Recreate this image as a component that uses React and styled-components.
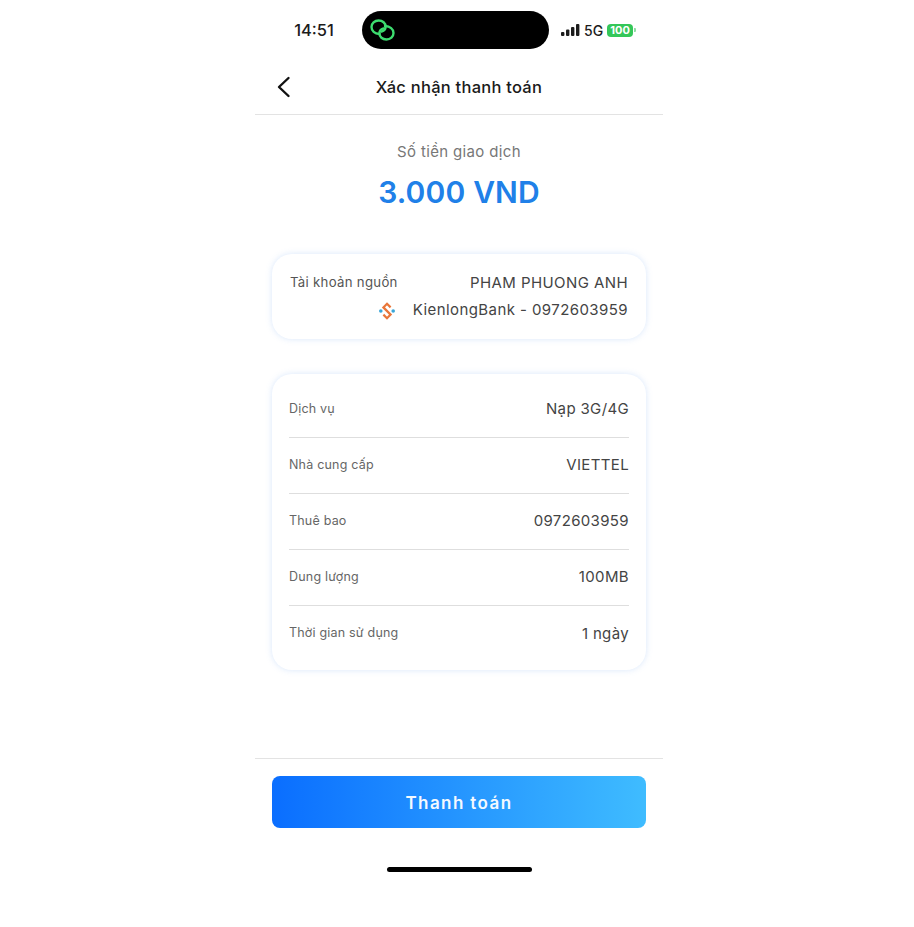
import React from "react";
import styled, { createGlobalStyle } from "styled-components";

const GlobalStyle = createGlobalStyle`
  html, body {
    margin: 0;
    padding: 0;
    background: #ffffff;
  }
  body {
    font-family: Inter, "Noto Sans", "Liberation Sans", sans-serif;
  }
`;

const Page = styled.div`
  width: 914px;
  height: 927px;
  padding-left: 255px;
  box-sizing: border-box;
  overflow: hidden;
`;

const Phone = styled.div`
  width: 408px;
  display: flex;
  flex-direction: column;
`;

const StatusBar = styled.div`
  height: 60px;
  padding-top: 11px;
  box-sizing: border-box;
  display: flex;
  align-items: flex-start;
`;

const Clock = styled.div`
  width: 107px;
  height: 38px;
  padding-left: 11px;
  box-sizing: border-box;
  line-height: 38px;
  text-align: center;
  font-size: 16.5px;
  font-weight: 500;
  color: #1c1c1c;
`;

const Island = styled.div`
  width: 187px;
  height: 38px;
  border-radius: 19px;
  background: #000;
  display: flex;
  align-items: center;
  padding-left: 8px;
  box-sizing: border-box;
`;

const StatusRight = styled.div`
  height: 38px;
  margin-left: 12px;
  display: flex;
  align-items: center;
`;

const Network = styled.span`
  margin: 0 4px 0 4px;
  font-size: 14px;
  font-weight: 500;
  color: #1c1c1c;
`;

const Battery = styled.span`
  width: 26px;
  height: 13px;
  border-radius: 4px;
  background: #34c759;
  color: #fff;
  font-size: 11px;
  font-weight: 700;
  line-height: 13px;
  text-align: center;
`;

const BatteryCap = styled.span`
  width: 1.5px;
  height: 4px;
  margin-left: 1px;
  border-radius: 0 1px 1px 0;
  background: #8fdca3;
`;

const Header = styled.header`
  height: 55px;
  border-bottom: 1px solid #e3e3e3;
  box-sizing: border-box;
  display: flex;
  align-items: center;
  justify-content: center;
  position: relative;
  padding-bottom: 1px;
`;

const BackButton = styled.div`
  position: absolute;
  left: 20px;
  top: 14px;
  width: 18px;
  height: 26px;
`;

const Title = styled.h1`
  margin: 0;
  font-size: 16.5px;
  font-weight: 500;
  letter-spacing: 0.25px;
  color: #1a1a1a;
`;

const Amount = styled.section`
  height: 139px;
  padding-top: 27px;
  box-sizing: border-box;
  display: flex;
  flex-direction: column;
  align-items: center;
`;

const AmountLabel = styled.div`
  font-size: 15px;
  line-height: 20px;
  letter-spacing: 0.35px;
  color: #777;
`;

const AmountValue = styled.div`
  margin-top: 11px;
  font-size: 30px;
  line-height: 38px;
  font-weight: 600;
  letter-spacing: 0.15px;
  color: #2080e8;
`;

const Card = styled.section`
  margin: 0 17px;
  background: #fff;
  border-radius: 20px;
  box-shadow: 0 0 6px rgba(120, 170, 240, 0.28);
`;

const SourceCard = styled(Card)`
  height: 85px;
  padding: 16px 18px 0 18px;
  box-sizing: border-box;
  display: flex;
  flex-direction: column;
`;

const SourceRow = styled.div`
  display: flex;
  justify-content: space-between;
  align-items: center;
  height: 27px;
`;

const SourceLabel = styled.span`
  font-size: 13.2px;
  line-height: 20px;
  letter-spacing: 0.3px;
  color: #555;
  margin-top: -3px;
`;

const SourceValue = styled.span`
  font-size: 15px;
  line-height: 20px;
  letter-spacing: 0.42px;
  color: #444;
  margin-top: -1px;
`;

const BankRow = styled(SourceRow)`
  justify-content: flex-end;
  gap: 18px;
`;

const DetailCard = styled(Card)`
  margin-top: 35px;
  height: 296px;
  padding: 8px 17px 0 17px;
  box-sizing: border-box;
`;

const DetailRow = styled.div`
  height: 56px;
  box-sizing: border-box;
  display: flex;
  justify-content: space-between;
  align-items: center;
  border-bottom: ${({ $last }) => ($last ? "none" : "1px solid #dedede")};
`;

const DetailLabel = styled.span`
  font-size: 12.5px;
  line-height: 20px;
  letter-spacing: 0.2px;
  color: #666;
  margin-top: -2px;
`;

const DetailValue = styled.span`
  font-size: 15px;
  line-height: 20px;
  letter-spacing: 0.35px;
  color: #444;
  margin-top: -1px;
`;

const Footer = styled.footer`
  margin-top: 88px;
  border-top: 1px solid #e3e3e3;
  padding: 17px 17px 0 17px;
`;

const PayButton = styled.button`
  display: block;
  width: 100%;
  height: 52px;
  padding: 1px 0 0;
  border: none;
  border-radius: 8px;
  background: linear-gradient(90deg, #0a6eff 0%, #3fbcff 100%);
  color: #f4f9ff;
  font-family: inherit;
  font-size: 17px;
  font-weight: 600;
  letter-spacing: 1.4px;
`;

const HomeIndicator = styled.div`
  width: 145px;
  height: 5px;
  margin: 39px auto 0;
  border-radius: 3px;
  background: #000;
`;

const LinkIcon = () => (
  <svg width="25" height="22" viewBox="0 0 25 22" fill="none" stroke="#3ddc6f" strokeWidth="2.4" strokeLinecap="round">
    <path d="M9.5 15 C4.6 14.6 1.5 11.8 1.5 8 C1.5 4.2 4.6 1.5 8.6 1.5 C12.6 1.5 15.6 4.2 15.6 7.6 C15.6 10.2 13.8 12 11.6 12.6" />
    <path d="M15 7 C20 7.4 23.5 10.2 23.5 14 C23.5 17.8 20.4 20.5 16.4 20.5 C12.4 20.5 9.4 17.8 9.4 14.4 C9.4 11.8 11.2 10 13.4 9.4" />
  </svg>
);

const SignalIcon = () => (
  <svg width="19" height="12" viewBox="0 0 19 12" fill="#1c1c1c">
    <rect x="0" y="8" width="3.4" height="4" rx="1" />
    <rect x="5" y="5.5" width="3.4" height="6.5" rx="1" />
    <rect x="10" y="3" width="3.4" height="9" rx="1" />
    <rect x="15" y="0" width="3.4" height="12" rx="1" />
  </svg>
);

const BackIcon = () => (
  <svg width="18" height="26" viewBox="0 0 18 26" fill="none" stroke="#111" strokeWidth="2.4" strokeLinecap="round" strokeLinejoin="round">
    <path d="M13.5 4 L4 13 L13.5 22" />
  </svg>
);

const BankLogo = () => (
  <svg width="16" height="18" viewBox="0 0 16 18" fill="none">
    <path d="M11.6 5.4 L8 1.8 L4.4 5.4 L11.6 12.6 L8 16.2 L4.4 12.6" stroke="#e8763a" strokeWidth="2.2" />
    <circle cx="1.8" cy="9" r="1.8" fill="#3aa6d8" />
    <circle cx="14.2" cy="9" r="1.8" fill="#3aa6d8" />
  </svg>
);

const details = [
  { label: "Dịch vụ", value: "Nạp 3G/4G" },
  { label: "Nhà cung cấp", value: "VIETTEL" },
  { label: "Thuê bao", value: "0972603959" },
  { label: "Dung lượng", value: "100MB" },
  { label: "Thời gian sử dụng", value: "1 ngày" },
];

export default function App() {
  return (
    <Page>
      <GlobalStyle />
      <Phone>
        <StatusBar>
          <Clock>14:51</Clock>
          <Island>
            <LinkIcon />
          </Island>
          <StatusRight>
            <SignalIcon />
            <Network>5G</Network>
            <Battery>100</Battery>
            <BatteryCap />
          </StatusRight>
        </StatusBar>

        <Header>
          <BackButton>
            <BackIcon />
          </BackButton>
          <Title>Xác nhận thanh toán</Title>
        </Header>

        <Amount>
          <AmountLabel>Số tiền giao dịch</AmountLabel>
          <AmountValue>3.000 VND</AmountValue>
        </Amount>

        <SourceCard>
          <SourceRow>
            <SourceLabel>Tài khoản nguồn</SourceLabel>
            <SourceValue>PHAM PHUONG ANH</SourceValue>
          </SourceRow>
          <BankRow>
            <BankLogo />
            <SourceValue>KienlongBank - 0972603959</SourceValue>
          </BankRow>
        </SourceCard>

        <DetailCard>
          {details.map((row, i) => (
            <DetailRow key={row.label} $last={i === details.length - 1}>
              <DetailLabel>{row.label}</DetailLabel>
              <DetailValue>{row.value}</DetailValue>
            </DetailRow>
          ))}
        </DetailCard>

        <Footer>
          <PayButton>Thanh toán</PayButton>
          <HomeIndicator />
        </Footer>
      </Phone>
    </Page>
  );
}
